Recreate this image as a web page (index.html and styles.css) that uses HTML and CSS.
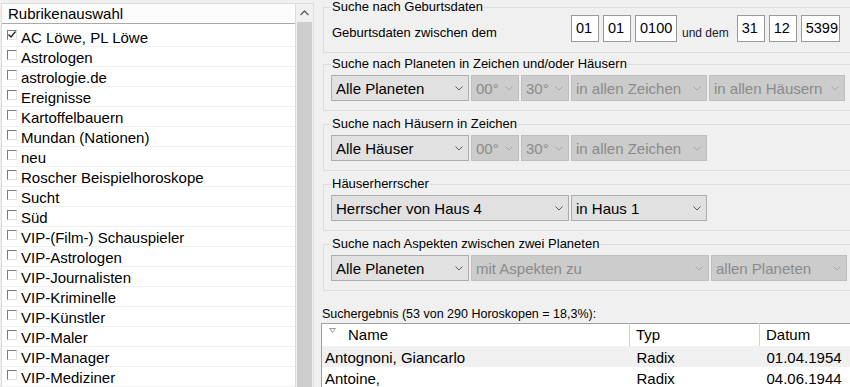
FILE: index.html
```html
<!DOCTYPE html>
<html lang="de">

<head>
    <meta charset="UTF-8">
    <meta name="viewport" content="width=device-width, initial-scale=1.0">
    <title>Horoskopsuche</title>
    <link rel="stylesheet" href="styles.css">
</head>

<body>

    <div class="window">

        <!-- linke Seite: Rubriken -->
        <div class="rubrik-panel">
            <div class="rubrik-list">
                <div class="rubrik-head">Rubrikenauswahl</div>
                <ul class="rubrik-items">
                    <li><span class="check"><svg width="8" height="8" viewBox="0 0 8 8"><path d="M0.5 3.5 L3 6 L7.5 0.5" fill="none" stroke="#222" stroke-width="1.3"/></svg></span>AC Löwe, PL Löwe</li>
                    <li><span class="check"></span>Astrologen</li>
                    <li><span class="check"></span>astrologie.de</li>
                    <li><span class="check"></span>Ereignisse</li>
                    <li><span class="check"></span>Kartoffelbauern</li>
                    <li><span class="check"></span>Mundan (Nationen)</li>
                    <li><span class="check"></span>neu</li>
                    <li><span class="check"></span>Roscher Beispielhoroskope</li>
                    <li><span class="check"></span>Sucht</li>
                    <li><span class="check"></span>Süd</li>
                    <li><span class="check"></span>VIP-(Film-) Schauspieler</li>
                    <li><span class="check"></span>VIP-Astrologen</li>
                    <li><span class="check"></span>VIP-Journalisten</li>
                    <li><span class="check"></span>VIP-Kriminelle</li>
                    <li><span class="check"></span>VIP-Künstler</li>
                    <li><span class="check"></span>VIP-Maler</li>
                    <li><span class="check"></span>VIP-Manager</li>
                    <li><span class="check"></span>VIP-Mediziner</li>
                </ul>
            </div>
            <div class="scrollbar">
                <div class="scroll-up">
                    <svg width="9" height="6" viewBox="0 0 9 6"><path d="M0.5 5 L4.5 1 L8.5 5" fill="none" stroke="#606060" stroke-width="1.4"/></svg>
                </div>
                <div class="scroll-thumb"></div>
            </div>
        </div>

        <!-- rechte Seite: Suchkriterien -->
        <div class="search">

            <fieldset class="group group-dates">
                <legend>Suche nach Geburtsdaten</legend>
                <div class="date-row">
                    <span class="date-label">Geburtsdaten zwischen dem</span>
                    <input class="date-box w-day" type="text" value="01">
                    <input class="date-box w-day gap" type="text" value="01">
                    <input class="date-box w-year gap" type="text" value="0100">
                    <span class="date-and">und dem</span>
                    <input class="date-box w-day wide-gap" type="text" value="31">
                    <input class="date-box w-day gap" type="text" value="12">
                    <input class="date-box w-year2 gap" type="text" value="5399">
                </div>
            </fieldset>

            <fieldset class="group">
                <legend>Suche nach Planeten in Zeichen und/oder Häusern</legend>
                <div class="combo-row">
                    <div class="combo w-main"><span>Alle Planeten</span><svg class="chev" width="8" height="5" viewBox="0 0 8 5"><path d="M0.5 0.5 L4 4 L7.5 0.5" fill="none" stroke-width="1"/></svg></div>
                    <div class="combo w-deg disabled"><span>00°</span><svg class="chev" width="8" height="5" viewBox="0 0 8 5"><path d="M0.5 0.5 L4 4 L7.5 0.5" fill="none" stroke-width="1"/></svg></div>
                    <div class="combo w-deg disabled"><span>30°</span><svg class="chev" width="8" height="5" viewBox="0 0 8 5"><path d="M0.5 0.5 L4 4 L7.5 0.5" fill="none" stroke-width="1"/></svg></div>
                    <div class="combo w-side disabled"><span>in allen Zeichen</span><svg class="chev" width="8" height="5" viewBox="0 0 8 5"><path d="M0.5 0.5 L4 4 L7.5 0.5" fill="none" stroke-width="1"/></svg></div>
                    <div class="combo w-side disabled"><span>in allen Häusern</span><svg class="chev" width="8" height="5" viewBox="0 0 8 5"><path d="M0.5 0.5 L4 4 L7.5 0.5" fill="none" stroke-width="1"/></svg></div>
                </div>
            </fieldset>

            <fieldset class="group">
                <legend>Suche nach Häusern in Zeichen</legend>
                <div class="combo-row">
                    <div class="combo w-main"><span>Alle Häuser</span><svg class="chev" width="8" height="5" viewBox="0 0 8 5"><path d="M0.5 0.5 L4 4 L7.5 0.5" fill="none" stroke-width="1"/></svg></div>
                    <div class="combo w-deg disabled"><span>00°</span><svg class="chev" width="8" height="5" viewBox="0 0 8 5"><path d="M0.5 0.5 L4 4 L7.5 0.5" fill="none" stroke-width="1"/></svg></div>
                    <div class="combo w-deg disabled"><span>30°</span><svg class="chev" width="8" height="5" viewBox="0 0 8 5"><path d="M0.5 0.5 L4 4 L7.5 0.5" fill="none" stroke-width="1"/></svg></div>
                    <div class="combo w-side disabled"><span>in allen Zeichen</span><svg class="chev" width="8" height="5" viewBox="0 0 8 5"><path d="M0.5 0.5 L4 4 L7.5 0.5" fill="none" stroke-width="1"/></svg></div>
                </div>
            </fieldset>

            <fieldset class="group">
                <legend>Häuserherrscher</legend>
                <div class="combo-row">
                    <div class="combo w-wide"><span>Herrscher von Haus 4</span><svg class="chev" width="8" height="5" viewBox="0 0 8 5"><path d="M0.5 0.5 L4 4 L7.5 0.5" fill="none" stroke-width="1"/></svg></div>
                    <div class="combo w-side"><span>in Haus 1</span><svg class="chev" width="8" height="5" viewBox="0 0 8 5"><path d="M0.5 0.5 L4 4 L7.5 0.5" fill="none" stroke-width="1"/></svg></div>
                </div>
            </fieldset>

            <fieldset class="group">
                <legend>Suche nach Aspekten zwischen zwei Planeten</legend>
                <div class="combo-row">
                    <div class="combo w-main"><span>Alle Planeten</span><svg class="chev" width="8" height="5" viewBox="0 0 8 5"><path d="M0.5 0.5 L4 4 L7.5 0.5" fill="none" stroke-width="1"/></svg></div>
                    <div class="combo w-wide disabled"><span>mit Aspekten zu</span><svg class="chev" width="8" height="5" viewBox="0 0 8 5"><path d="M0.5 0.5 L4 4 L7.5 0.5" fill="none" stroke-width="1"/></svg></div>
                    <div class="combo w-side disabled"><span>allen Planeten</span><svg class="chev" width="8" height="5" viewBox="0 0 8 5"><path d="M0.5 0.5 L4 4 L7.5 0.5" fill="none" stroke-width="1"/></svg></div>
                </div>
            </fieldset>

            <div class="result-label">Suchergebnis (53 von 290 Horoskopen = 18,3%):</div>

            <table class="result-table">
                <colgroup>
                    <col class="c-name">
                    <col class="c-typ">
                    <col class="c-datum">
                </colgroup>
                <thead>
                    <tr>
                        <th class="col-name"><svg class="sort" width="7" height="5" viewBox="0 0 7 5"><path d="M0.5 0.5 L6.5 0.5 L3.5 4.5 Z" fill="none" stroke="#9a9a9a" stroke-width="1"/></svg>Name</th>
                        <th class="col-typ">Typ</th>
                        <th class="col-datum">Datum</th>
                    </tr>
                </thead>
                <tbody>
                    <tr class="selected">
                        <td>Antognoni, Giancarlo</td>
                        <td class="cell-typ">Radix</td>
                        <td class="cell-datum">01.04.1954</td>
                    </tr>
                    <tr>
                        <td>Antoine,</td>
                        <td class="cell-typ">Radix</td>
                        <td class="cell-datum">04.06.1944</td>
                    </tr>
                </tbody>
            </table>

        </div>
    </div>

</body>

</html>
```

FILE: styles.css
```css
body {
    margin: 0;
    padding: 0;
    height: 387px;
    overflow: hidden;
    background-color: #f0f0f0;
    font-family: "Liberation Sans", Arial, sans-serif;
    color: #000;
}

.window {
    display: flex;
    height: 100%;
}

/* ---------- Rubrikenauswahl ---------- */

.rubrik-panel {
    display: flex;
    flex-shrink: 0;
    margin: 3px 0 0 1px;
    border: 1px solid #dcdcdc;
    border-bottom: none;
    background-color: #fff;
}

.rubrik-list {
    width: 293px;
    border-right: 1px solid #dcdcdc;
}

.rubrik-head {
    height: 19px;
    line-height: 19px;
    padding-left: 6px;
    font-size: 15px;
    background-color: #fcfcfc;
    border-bottom: 1px solid #a9a9a9;
}

.rubrik-items {
    list-style: none;
    margin: 0;
    padding: 3px 0 0 0;
}

.rubrik-items li {
    box-sizing: border-box;
    height: 20px;
    padding: 1px 0 0 5px;
    line-height: 19px;
    font-size: 15px;
    white-space: nowrap;
    border-bottom: 1px solid #f0f0f0;
}

.check {
    display: inline-block;
    box-sizing: border-box;
    width: 10px;
    height: 10px;
    margin: 2px 4px 0 0;
    vertical-align: top;
    border-top: 1px solid #7a7a7a;
    border-left: 1px solid #7a7a7a;
    border-right: 1px solid #e3e3e3;
    border-bottom: 1px solid #e3e3e3;
    background-color: #fff;
    position: relative;
}

.check svg {
    position: absolute;
    left: 0;
    top: 0;
}

.scrollbar {
    width: 17px;
    display: flex;
    flex-direction: column;
    background-color: #f0f0f0;
}

.scroll-up {
    height: 18px;
    display: flex;
    justify-content: center;
    align-items: center;
}

.scroll-thumb {
    flex: 1;
    margin: 0 1px;
    background-color: #cdcdcd;
}

/* ---------- Suchkriterien ---------- */

.search {
    flex: 1;
    overflow: hidden;
    padding-left: 9px;
}

.group {
    width: 540px;
    margin: 0 0 6px 0;
    padding: 4px 0 9px 7px;
    border: 1px solid #dcdcdc;
}

.group legend {
    padding: 0 1px;
    font-size: 13px;
    line-height: 14px;
    color: #000;
}

.group-dates {
    margin-bottom: 4px;
    padding-top: 1px;
    padding-bottom: 10px;
}

.date-row {
    display: flex;
    align-items: flex-start;
}

.date-label {
    width: 239px;
    padding-left: 1px;
    margin-top: 11px;
    font-size: 13px;
    line-height: 14px;
}

.date-and {
    margin: 11px 0 0 5px;
    font-size: 12px;
    line-height: 14px;
    color: #1a1a2a;
}

.date-box {
    box-sizing: border-box;
    height: 27px;
    margin: 0;
    padding: 0 0 2px 4px;
    border: 1px solid #9a9a9a;
    background-color: #fff;
    font-family: "Liberation Sans", Arial, sans-serif;
    font-size: 14.5px;
    color: #000;
}

.w-day {
    width: 28px;
}

.w-year {
    width: 42px;
}

.w-year2 {
    width: 39px;
}

.gap {
    margin-left: 4px;
}

.wide-gap {
    margin-left: 8px;
}

.combo-row {
    display: flex;
    gap: 2px;
}

.combo {
    box-sizing: border-box;
    height: 26px;
    display: flex;
    align-items: center;
    justify-content: space-between;
    padding: 0 5px 0 4px;
    border: 1px solid #adadad;
    background-color: #e1e1e1;
    font-size: 15px;
    white-space: nowrap;
}

.combo .chev {
    stroke: #5a5a5a;
    flex-shrink: 0;
}

.combo.disabled {
    border-color: #bfbfbf;
    background-color: #cccccc;
    color: #8a8a8a;
}

.combo.disabled .chev {
    stroke: #a6a6a6;
}

.w-main {
    width: 138px;
}

.w-deg {
    width: 48px;
}

.w-side {
    width: 136px;
}

.w-wide {
    width: 238px;
}

/* ---------- Suchergebnis ---------- */

.result-label {
    margin: 16px 0 2px -1px;
    font-size: 12.5px;
    line-height: 14px;
}

.result-table {
    width: 600px;
    table-layout: fixed;
    margin-left: -2px;
    border-collapse: collapse;
    background-color: #fff;
    border-top: 1px solid #a0a0a0;
    border-left: 1px solid #a0a0a0;
    font-size: 15px;
}

.c-name {
    width: 308px;
}

.c-typ {
    width: 130px;
}

.c-datum {
    width: 162px;
}

.result-table th {
    height: 22px;
    padding: 0;
    font-weight: normal;
    text-align: left;
    line-height: 22px;
    background-color: #fff;
    white-space: nowrap;
}

.result-table th.col-name {
    padding-left: 7px;
}

.sort {
    vertical-align: top;
    margin: 4px 12px 0 0;
}

.result-table th.col-typ,
.result-table th.col-datum {
    border-left: 1px solid #d0d0d0;
    padding-left: 6px;
}

.result-table td {
    height: 20px;
    padding: 1px 0 0 3px;
    line-height: 19px;
    white-space: nowrap;
}

.result-table td.cell-typ,
.result-table td.cell-datum {
    padding-left: 7px;
}

.result-table tr.selected td {
    background-color: #f0f0f0;
}
```
